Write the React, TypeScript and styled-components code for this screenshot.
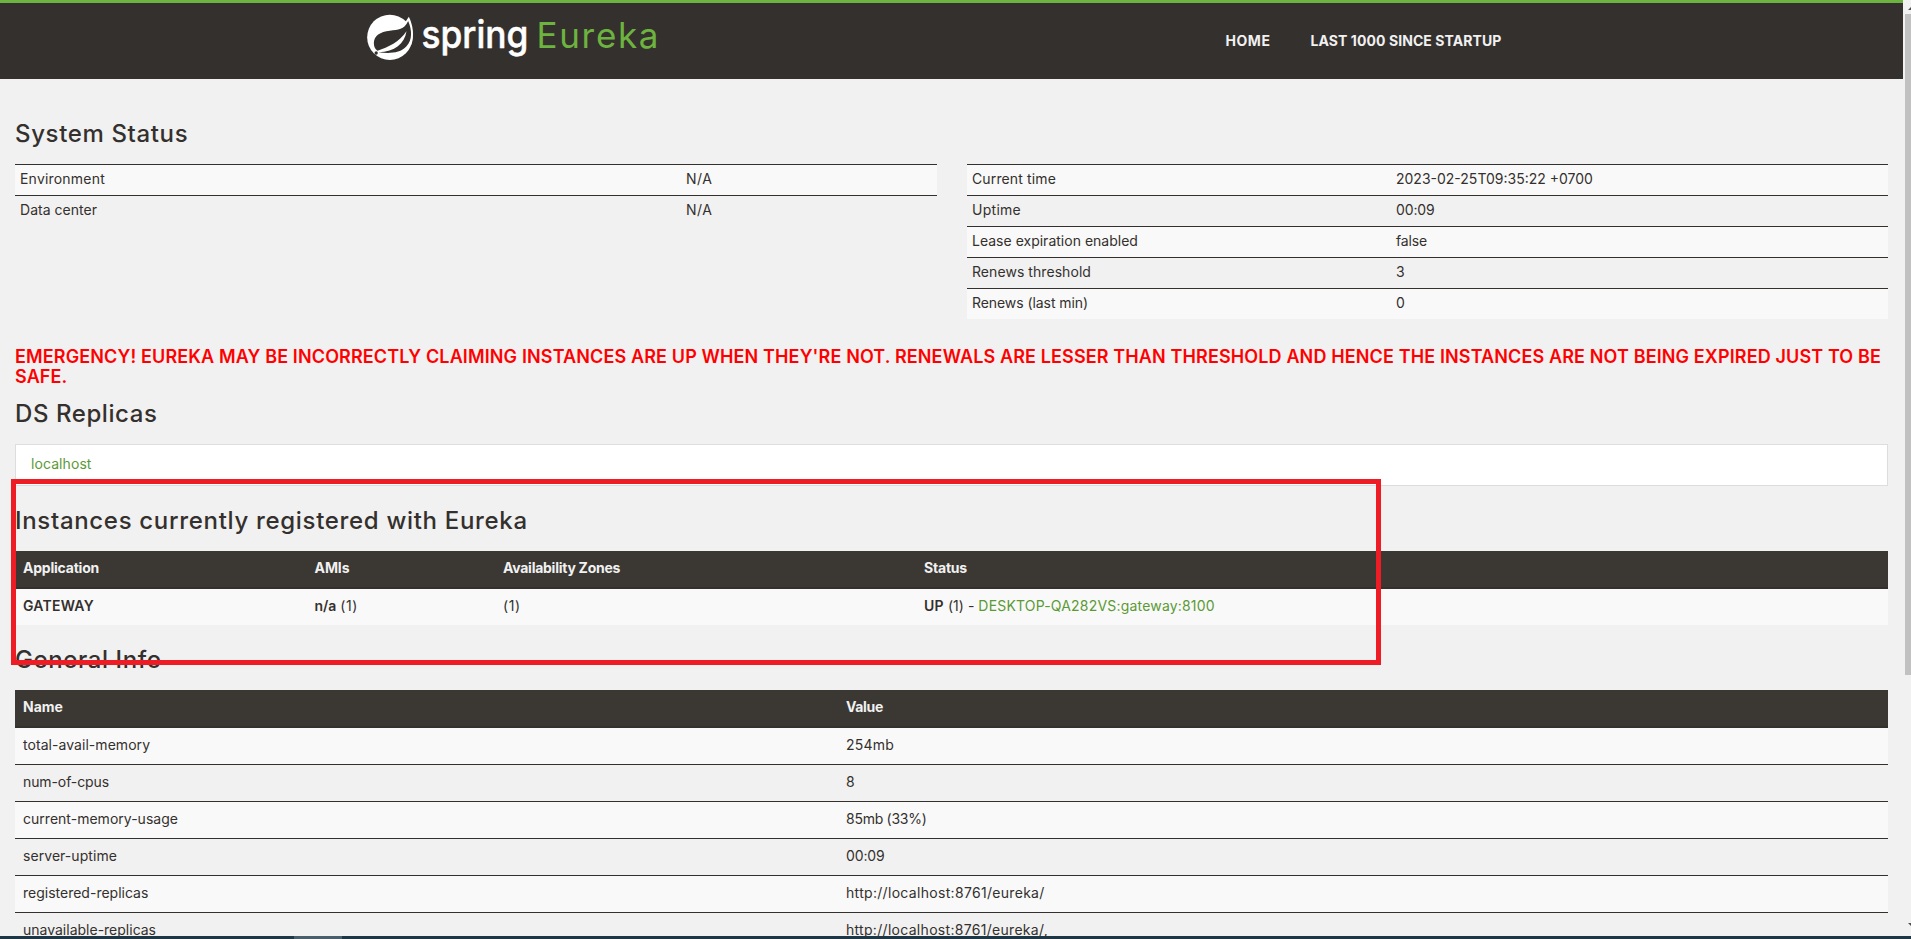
import React from 'react';
import styled, { createGlobalStyle } from 'styled-components';

const colors = {
  dark: '#34302d',
  tableHead: '#3b3833',
  green: '#6db33f',
  link: '#5c9a36',
  page: '#f1f1f1',
  stripe: '#f9f9f9',
  alert: '#ff0000',
  marker: '#ee1c25',
};

const GlobalStyle = createGlobalStyle`
  * { box-sizing: border-box; }
  html, body { margin: 0; padding: 0; overflow: hidden; }
  body {
    background: ${colors.page};
    color: ${colors.dark};
    font: 14px/20px Inter, "Open Sans", sans-serif;
  }
`;

const Screen = styled.div`
  display: flex;
  flex-direction: column;
  height: 939px;
  overflow: hidden;
`;

const Viewport = styled.div`
  display: flex;
  flex: 1;
  min-height: 0;
`;

const Page = styled.div`
  position: relative;
  flex: 1;
  min-width: 0;
  overflow: hidden;
`;

const Header = styled.header`
  height: 79px;
  border-top: 3px solid ${colors.green};
  background: ${colors.dark};
`;

const HeaderInner = styled.div`
  display: flex;
  justify-content: space-between;
  width: 1170px;
  margin: 0 auto;
`;

const Brand = styled.svg`
  display: block;
  width: 300px;
  height: 60px;
  overflow: visible;
`;

const Nav = styled.nav`
  display: flex;
  gap: 40px;
  padding: 28px 35px 0 0;
`;

/* Shared letter-spacing control for every run of text. */
const Text = styled.span<{ $track?: number }>`
  letter-spacing: ${(p) => p.$track ?? 0}px;
  white-space: nowrap;
`;

const NavLink = styled(Text)`
  color: ${colors.page};
  font-weight: 700;
`;

const Content = styled.main`
  padding: 41px 15px 0;
`;

const Heading = styled.h1<{ $track: number }>`
  margin: 0 0 16px;
  font-size: 24px;
  line-height: 28px;
  font-weight: 500;
  letter-spacing: ${(p) => p.$track}px;
`;

const StatusColumns = styled.div`
  display: grid;
  grid-template-columns: 922px 921px;
  column-gap: 30px;
  align-items: start;
`;

const StatusTable = styled.div<{ $label: number }>`
  display: grid;
  grid-template-columns: ${(p) => p.$label}px 1fr;
`;

const StatusCell = styled.div<{ $striped: boolean }>`
  height: 31px;
  padding: 4px 5px;
  border-top: 1px solid ${colors.dark};
  background: ${(p) => (p.$striped ? colors.stripe : 'transparent')};
`;

const Alert = styled.h4`
  width: 1873px;
  margin: 28px 0 13px;
  color: ${colors.alert};
  font-size: 18px;
  line-height: 20px;
  font-weight: 600;
  letter-spacing: 0.127px;
`;

const ReplicaPanel = styled.div`
  height: 42px;
  margin-bottom: 21px;
  padding: 9px 15px;
  border: 1px solid #dddddd;
  background: #ffffff;
`;

const Link = styled(Text)`
  color: ${colors.link};
`;

const Strong = styled(Text)`
  font-weight: 600;
`;

const DataTable = styled.div`
  margin-bottom: 21px;
`;

const HeadRow = styled.div<{ $cols: string }>`
  display: grid;
  grid-template-columns: ${(p) => p.$cols};
  height: 38px;
  border-bottom: 2px solid ${colors.dark};
  background: ${colors.tableHead};
  color: ${colors.page};
  font-weight: 700;
`;

const BodyRow = styled.div<{ $cols: string }>`
  display: grid;
  grid-template-columns: ${(p) => p.$cols};

  &:nth-child(even) { background: ${colors.stripe}; }
  & + & { border-top: 1px solid ${colors.dark}; }
`;

const Cell = styled.div`
  padding: 7px 8px 9px;
  white-space: nowrap;
`;

const Marker = styled.div`
  position: absolute;
  left: 11px;
  top: 479px;
  width: 1370px;
  height: 186px;
  border: 5px solid ${colors.marker};
`;

const Scrollbar = styled.div`
  display: flex;
  flex-direction: column;
  justify-content: space-between;
  width: 8px;
  padding: 6px 0 8px 2px;
  background: ${colors.page};
`;

const Thumb = styled.div`
  height: 661px;
  margin: 3px 0 auto;
  background: #c1c1c1;
`;

const Arrow = styled.svg`
  display: block;
  width: 6px;
  height: 5px;
`;

const Taskbar = styled.div`
  height: 3px;
  padding-left: 294px;
  background: #1f3644;
`;

const TaskItem = styled.div`
  width: 48px;
  height: 3px;
  background: #4b5f6a;
`;

type Label = [text: string, track: number];

const leftStatus: [Label, Label][] = [
  [['Environment', 0.2], ['N/A', 0.5]],
  [['Data center', 0.03], ['N/A', 0.5]],
];

const rightStatus: [Label, Label][] = [
  [['Current time', 0.135], ['2023-02-25T09:35:22 +0700', 0]],
  [['Uptime', 0.27], ['00:09', -0.14]],
  [['Lease expiration enabled', 0.01], ['false', -0.15]],
  [['Renews threshold', 0.06], ['3', 0]],
  [['Renews (last min)', -0.07], ['0', 0]],
];

const generalInfo: [Label, Label][] = [
  [['total-avail-memory', 0.05], ['254mb', 0.2]],
  [['num-of-cpus', -0.1], ['8', 0]],
  [['current-memory-usage', 0.02], ['85mb (33%)', -0.27]],
  [['server-uptime', 0.06], ['00:09', -0.14]],
  [['registered-replicas', 0], ['http://localhost:8761/eureka/', 0.31]],
  [['unavailable-replicas', 0], ['http://localhost:8761/eureka/,', 0.3]],
];

const instanceCols = '291.5px 188.5px 421px 1fr';
const infoCols = '823px 1fr';

function StatusRows({ rows }: { rows: [Label, Label][] }) {
  return (
    <>
      {rows.map(([name, value], i) => (
        <React.Fragment key={name[0]}>
          <StatusCell $striped={i % 2 === 0}><Text $track={name[1]}>{name[0]}</Text></StatusCell>
          <StatusCell $striped={i % 2 === 0}><Text $track={value[1]}>{value[0]}</Text></StatusCell>
        </React.Fragment>
      ))}
    </>
  );
}

function Logo() {
  return (
    <Brand viewBox="0 0 300 60">
      <g transform="translate(-16.5 -3) scale(0.33333)">
        <circle cx="118" cy="112" r="68" fill="#fff" />
        <path d="M175 50 C188 76 192 110 182 135 L150 130 L150 88 Z" fill="#fff" />
        <path
          d="M173 63 C160 90 144 89 118 92 C89 95 70 107 70 130 C70 141 75 149 81 152 C113 142 147 126 168 94 C162 132 133 155 84 157 C112 160 148 162 168 139 C186 119 185 92 173 63 Z"
          fill={colors.dark}
        />
        <circle cx="77" cy="159" r="5" fill={colors.dark} />
      </g>
      <text x="54.5" y="44.5" fontFamily="Inter" fontSize="38" fontWeight="500" fill="#fff" stroke="#fff" strokeWidth="0.5" strokeLinejoin="round" textLength="107" lengthAdjust="spacingAndGlyphs">spring</text>
      <text x="169.5" y="44.8" fontFamily="Inter" fontSize="35" fontWeight="400" fill={colors.green} textLength="122">Eureka</text>
    </Brand>
  );
}

export default function App() {
  return (
    <Screen>
      <GlobalStyle />
      <Viewport>
        <Page>
          <Header>
            <HeaderInner>
              <Logo />
              <Nav>
                <NavLink $track={0.55}>HOME</NavLink>
                <NavLink $track={0.08}>LAST 1000 SINCE STARTUP</NavLink>
              </Nav>
            </HeaderInner>
          </Header>
          <Content>
            <Heading $track={0.64}>System Status</Heading>
            <StatusColumns>
              <StatusTable $label={666}><StatusRows rows={leftStatus} /></StatusTable>
              <StatusTable $label={424}><StatusRows rows={rightStatus} /></StatusTable>
            </StatusColumns>
            <Alert>
              EMERGENCY! EUREKA MAY BE INCORRECTLY CLAIMING INSTANCES ARE UP WHEN THEY'RE NOT. RENEWALS ARE LESSER
              THAN THRESHOLD AND HENCE THE INSTANCES ARE NOT BEING EXPIRED JUST TO BE SAFE.
            </Alert>
            <Heading $track={0.58}>DS Replicas</Heading>
            <ReplicaPanel><Link $track={0.08}>localhost</Link></ReplicaPanel>
            <Heading $track={0.68}>Instances currently registered with Eureka</Heading>
            <DataTable>
              <HeadRow $cols={instanceCols}>
                <Cell><Text $track={-0.22}>Application</Text></Cell>
                <Cell><Text $track={-0.07}>AMIs</Text></Cell>
                <Cell><Text $track={-0.26}>Availability Zones</Text></Cell>
                <Cell><Text $track={-0.2}>Status</Text></Cell>
              </HeadRow>
              <BodyRow $cols={instanceCols}>
                <Cell><Strong $track={0.25}>GATEWAY</Strong></Cell>
                <Cell><Strong>n/a</Strong> <Text $track={0.5}>(1)</Text></Cell>
                <Cell><Text $track={0.6}>(1)</Text></Cell>
                <Cell>
                  <Strong $track={0.3}>UP</Strong> <Text $track={0.05}>(1) -</Text>{' '}
                  <Link $track={0.19}>DESKTOP-QA282VS:gateway:8100</Link>
                </Cell>
              </BodyRow>
            </DataTable>
            <Heading $track={0.6}>General Info</Heading>
            <DataTable>
              <HeadRow $cols={infoCols}>
                <Cell>Name</Cell>
                <Cell><Text $track={-0.32}>Value</Text></Cell>
              </HeadRow>
              {generalInfo.map(([name, value]) => (
                <BodyRow $cols={infoCols} key={name[0]}>
                  <Cell><Text $track={name[1]}>{name[0]}</Text></Cell>
                  <Cell><Text $track={value[1]}>{value[0]}</Text></Cell>
                </BodyRow>
              ))}
            </DataTable>
          </Content>
          <Marker />
        </Page>
        <Scrollbar>
          <Arrow viewBox="0 0 6 5"><path d="M3 4 L6 1 V4 Z" fill="#505050" /></Arrow>
          <Thumb />
          <Arrow viewBox="0 0 6 5"><path d="M3 0 H6 V3 Z" fill="#505050" /></Arrow>
        </Scrollbar>
      </Viewport>
      <Taskbar><TaskItem /></Taskbar>
    </Screen>
  );
}
